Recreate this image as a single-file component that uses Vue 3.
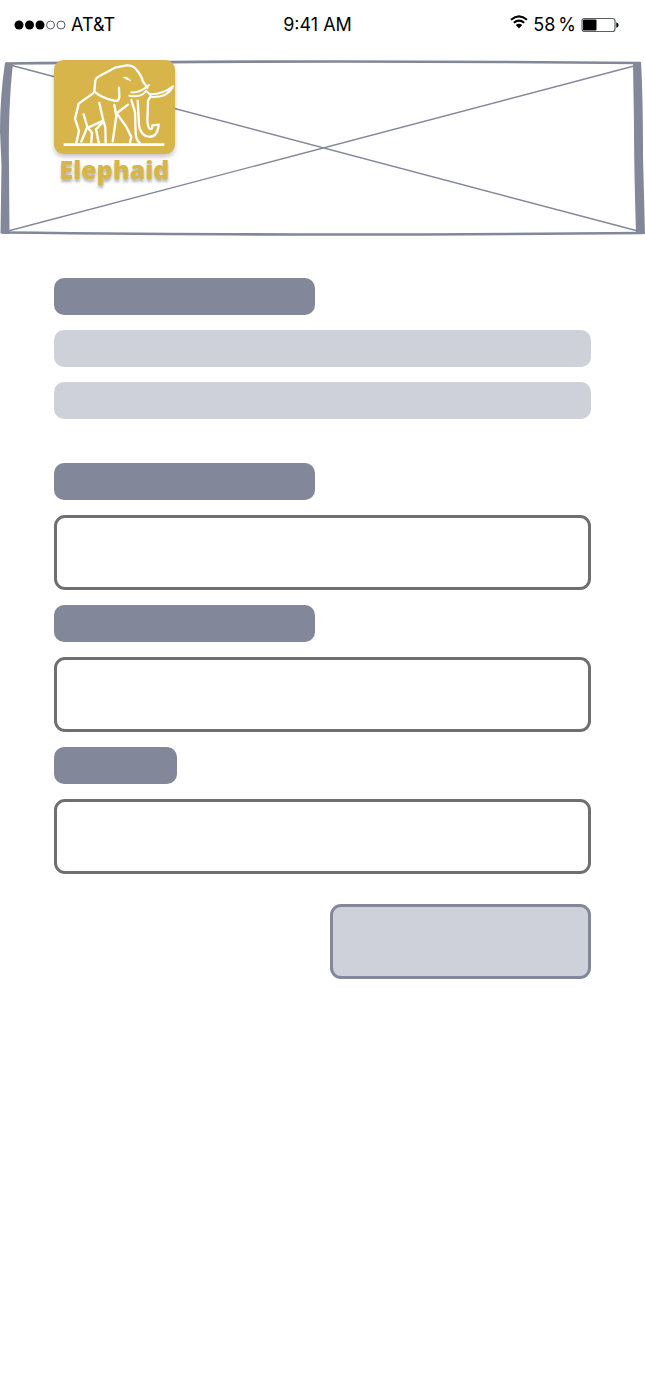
<script setup>
import { ref } from 'vue'

const signal = [true, true, true, false, false]
const fields = [
  { id: 'field-one', name: 'First field', short: false },
  { id: 'field-two', name: 'Second field', short: false },
  { id: 'field-three', name: 'Third field', short: true }
]
const values = ref({ 'field-one': '', 'field-two': '', 'field-three': '' })
</script>

<template>
  <div class="screen">
    <div class="status">
      <div class="carrier">
        <svg class="signal" width="52" height="10" viewBox="0 0 52 10" aria-hidden="true">
          <circle
            v-for="(on, i) in signal"
            :key="i"
            :cx="5 + i * 10.5"
            cy="5"
            :r="on ? 4.5 : 4"
            :class="{ on }"
          />
        </svg>
        <span>AT&amp;T</span>
      </div>
      <time>9:41 AM</time>
      <div class="power">
        <svg class="wifi" width="18" height="14" viewBox="0 0 18 14" aria-hidden="true">
          <path d="M1 4.8Q9 -2 17 4.8M3.8 7.8Q9 3.4 14.2 7.8" fill="none" stroke="#000" stroke-width="2" />
          <path d="M5.8 10Q9 7.4 12.2 10L9 13.6Z" />
        </svg>
        <span class="charge"><span>58</span> <span>%</span></span>
        <svg class="battery" width="40" height="16" viewBox="0 0 40 16" aria-hidden="true">
          <rect x="1" y="1.5" width="33" height="13" rx="2.5" fill="#fff" stroke="#5d5f69" stroke-width="1.2" />
          <rect x="2" y="2.5" width="13.5" height="11" rx="1" />
          <path d="M35.3 5.2Q37.6 5.6 37.6 8T35.3 10.8Z" />
        </svg>
      </div>
    </div>

    <header class="banner">
      <svg class="frame" viewBox="0 0 645 180" preserveAspectRatio="none" aria-hidden="true">
        <g fill="none" stroke="#83879a">
          <path d="M12 9.500L636 174.500M8 175L634 10" stroke-width="1.4" />
          <path d="M6 7.500Q200 5.500 340 5.500T640 7" stroke-width="2.6" />
          <path d="M2 176.500Q200 178.500 340 178.500T643 177" stroke-width="2.6" />
        </g>
        <g fill="#83879a">
          <path d="M5 6.500L13 7.500Q8 50 9 110L9.500 178L0.500 177.500L1.500 110L0 75Q0 40 5 6.500Z" />
          <path d="M633 6L641 6Q643 40 643 100L645 178L636 178Q634 110 634 70Z" />
        </g>
      </svg>
      <a class="brand" href="#">
        <svg class="mark" width="121" height="94" viewBox="27 29 363 282" aria-hidden="true">
          <rect x="27" y="29" width="363" height="282" rx="29" fill="#d8b54b" />
          <g fill="none" stroke="#fff" stroke-width="7" stroke-linecap="round" stroke-linejoin="round">
            <path d="M60 283H354" stroke-width="8" stroke-linecap="square" />
            <path d="M148 124L151 90Q153 82 162 78L213 51L245 45Q262 44 272 55Q290 76 294 94L307 112" />
            <path d="M148 124Q172 144 207 151Q221 155 223 140L222 112" />
            <path d="M144 129L101 160L90 205L102 242L94 278" />
            <path d="M116 192L127 230L109 274M129 232L175 211L163 158M175 211L181 231L182 276" />
            <path d="M131 235L141 247L139 276M172 217L153 237L161 276" />
            <path d="M208 164L214 197L203 273M216 188L249 163M218 193L243 228L259 260L255 276" />
            <path d="M259 149L270 185L272 247Q272 268 284 277M278 151L282 222Q284 247 302 257Q337 268 341 223L322 225Q322 241 313 234Q305 224 308 190L309 151L317 138" />
            <path d="M253 136Q289 143 303 122" stroke-width="6" />
            <path d="M259 126Q286 128 312 104M303 121L316 133" stroke-width="6" />
            <path d="M316 132Q352 133 384 108Q368 142 320 140" stroke-width="6" />
          </g>
          <path d="M232 81Q247 74 259 93Q246 90 232 81Z" fill="#fff" />
        </svg>
        <span class="wordmark">Elephaid</span>
      </a>
    </header>

    <main>
      <section class="intro" aria-hidden="true">
        <div class="bar dark half"></div>
        <div class="bar"></div>
        <div class="bar"></div>
      </section>
      <form @submit.prevent>
        <template v-for="field in fields" :key="field.id">
          <label class="bar dark" :class="field.short ? 'short' : 'half'" :for="field.id"></label>
          <input :id="field.id" v-model="values[field.id]" type="text" :aria-label="field.name" />
        </template>
        <button type="submit" aria-label="Submit"></button>
      </form>
    </main>
  </div>
</template>

<style>
body {
  margin: 0;
  background: #fff;
}
</style>

<style scoped>
.screen {
  min-height: 100vh;
  background: #fff;
  color: #000;
  font-family: Inter, "Liberation Sans", sans-serif;
}

.status {
  display: grid;
  grid-template-columns: 1fr auto 1fr;
  align-items: center;
  height: 50px;
  padding: 0 24px 0 14px;
  font-size: 18px;
  line-height: 24px;
}

.carrier,
.power {
  display: flex;
  align-items: center;
  gap: 5px;
}

.power {
  justify-content: flex-end;
}

.charge {
  display: flex;
  gap: 3px;
}

.wifi {
  margin-bottom: 6px;
}

.signal circle {
  fill: #fff;
  stroke: #55566a;
  stroke-width: 1;
}

.signal circle.on {
  fill: #000;
  stroke: none;
}

.banner {
  position: relative;
  margin-top: 6px;
}

.frame {
  display: block;
  width: 100%;
  height: 180px;
}

.brand {
  position: absolute;
  top: 4px;
  left: 54px;
  display: flex;
  flex-direction: column;
  align-items: center;
  color: #d8b54b;
  text-decoration: none;
}

.mark {
  display: block;
  filter: drop-shadow(0 3px 2px rgba(0, 0, 0, 0.22));
}

.wordmark {
  font-family: "Open Sans", "Noto Sans", sans-serif;
  font-size: 25px;
  font-weight: 800;
  line-height: 30px;
  text-shadow: 0 3px 3px rgba(0, 0, 0, 0.3);
}

main {
  padding: 42px 54px;
}

.intro,
form {
  display: flex;
  flex-direction: column;
  gap: 15px;
}

form {
  margin-top: 44px;
}

.bar {
  height: 37px;
  border-radius: 10px;
  background: #ced0da;
}

.dark {
  background: #83879a;
}

.half {
  width: 261px;
}

.short {
  width: 123px;
}

input,
button {
  box-sizing: border-box;
  height: 75px;
  border: 3px solid #6f6f70;
  border-radius: 11px;
}

input {
  width: 100%;
  padding: 0 16px;
  background: #fff;
  font: inherit;
  font-size: 18px;
}

button {
  align-self: flex-end;
  width: 261px;
  margin-top: 15px;
  border-color: #83879a;
  background: #ced0da;
}
</style>
